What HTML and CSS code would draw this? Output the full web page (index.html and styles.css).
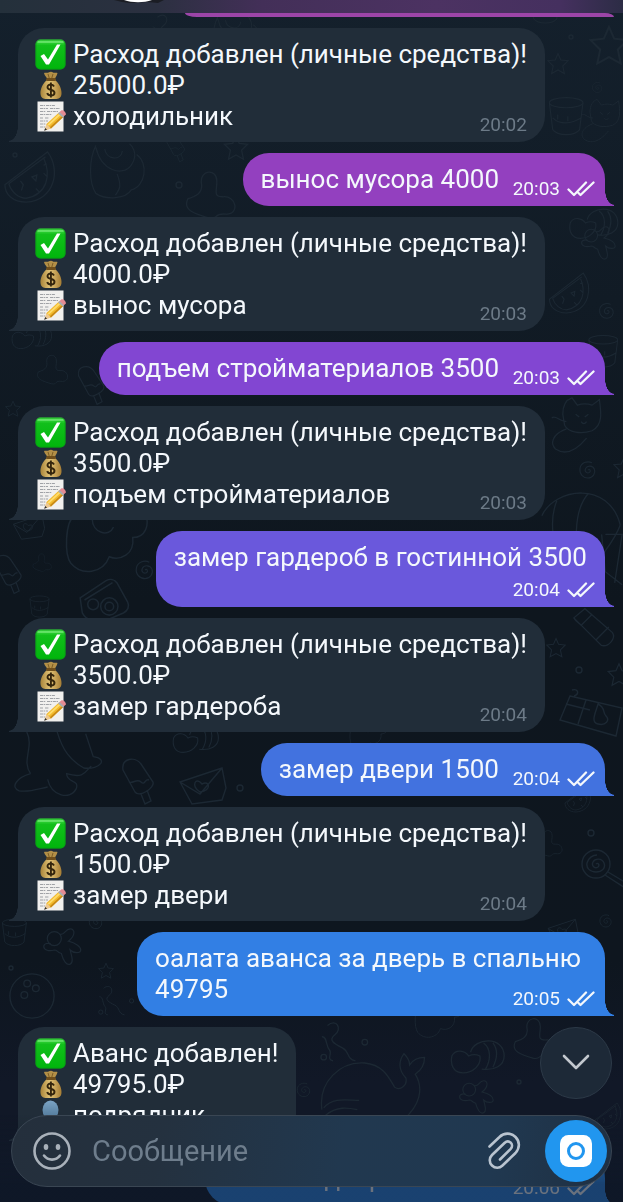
FILE: index.html
```html
<!DOCTYPE html>
<html lang="ru">
<head>
  <meta charset="UTF-8">
  <meta name="viewport" content="width=device-width, initial-scale=1">
  <title>Чат</title>
  <link rel="stylesheet" href="styles.css">
</head>
<body>
  <!-- icons -->
  <svg class="sprite" aria-hidden="true">
    <defs>
      <linearGradient id="g-check" x1="0" y1="0" x2="0" y2="1">
        <stop offset="0" stop-color="#4be04f"/>
        <stop offset=".2" stop-color="#12bf1b"/>
        <stop offset="1" stop-color="#00b50c"/>
      </linearGradient>
      <linearGradient id="g-bag" x1="0" y1="0" x2="1" y2="0">
        <stop offset="0" stop-color="#a8843a"/>
        <stop offset=".45" stop-color="#e3c477"/>
        <stop offset="1" stop-color="#a57c34"/>
      </linearGradient>
      <linearGradient id="g-user" x1="0" y1="0" x2="0" y2="1">
        <stop offset="0" stop-color="#7ba3c4"/>
        <stop offset="1" stop-color="#4d7596"/>
      </linearGradient>
    </defs>
    <symbol id="check" viewBox="0 0 31 31">
      <rect x="0.5" y="0.5" width="30" height="30" rx="5" fill="url(#g-check)"/>
      <rect x="1" y="1" width="29" height="29" rx="4.500" fill="none" stroke="#0a9a14" stroke-opacity=".6"/>
      <path d="M3 3h25" stroke="#8af08a" stroke-opacity=".7" stroke-width="1.500" stroke-linecap="round"/>
      <path d="M5.500 17l3.500-2 4 5.500L22 5.500h3.500L14 25.500h-3z" fill="#fff"/>
    </symbol>
    <symbol id="bag" viewBox="0 0 31 31">
      <path d="M9 3c2-1 3 .5 4.500-.5S17 1.500 18 2.500s3-.5 4.500.5c-.5 3-2.500 4.500-3 7h-7C12 7 9.500 6 9 3z" fill="#b28f47"/>
      <path d="M13 4l1.500 5M18 4l-1.500 5" stroke="#7c5d24" stroke-width="1" fill="none"/>
      <path d="M12 10h8c4 3 7 9 6.500 14-.3 4-3 5-6 5h-9c-3 0-5.700-1-6-5C5 19 8 13 12 10z" fill="url(#g-bag)"/>
      <rect x="11" y="8" width="10" height="3" rx="1.500" fill="#6f4f1c"/>
      <path d="M19 16.500c-.6-1.300-1.800-2-3.200-2-2 0-3.300 1-3.300 2.700 0 3.800 7 1.800 7 5.500 0 1.800-1.500 2.800-3.500 2.800-1.900 0-3.300-.8-3.800-2.500M15.900 12.500v15" fill="none" stroke="#33240c" stroke-width="1.900"/>
    </symbol>
    <symbol id="memo" viewBox="0 0 31 31">
      <rect x="2.500" y="0.5" width="26" height="30" fill="#f1f0ee"/>
      <path d="M5 4.500h5m1 0h9M5 7.500h8m2 0h10M5 10.500h6m1 0h11M5 13.500h12M5 17h3m2 0h4M5 20h8M5 23h6M5 26h5" stroke="#a0a2a6" stroke-width="1.100" stroke-dasharray="3 .6 1.600 .7"/>
      <path d="M10 29l1.500-6L24 11.500l4.500 4.200L16 27.500z" fill="#f2ba2c"/>
      <path d="M12.500 23.500l12-11 1.300 1.300-12 11z" fill="#ffdc6b"/>
      <path d="M14.500 26.500l12.500-11.500 1.500.8L16 27.500z" fill="#c98a17"/>
      <path d="M24 11.500l2.500-2.200c1.700-.8 5 2.200 4.300 4.200l-2.300 2.200z" fill="#e58b93"/>
      <path d="M23 12.400l1.500-1.400 4.600 4.200-1.500 1.400z" fill="#a9adb2"/>
      <path d="M11.500 23l4.500 4.500-6.500 2z" fill="#ecc893"/>
      <path d="M10.300 27l1.700 1.700-3 1z" fill="#2b2b2b"/>
    </symbol>
    <symbol id="user" viewBox="0 0 31 31">
      <ellipse cx="15.500" cy="10" rx="8" ry="9.500" fill="url(#g-user)"/>
      <path d="M2 31c0-7 6-10 13.500-10S29 24 29 31z" fill="url(#g-user)"/>
    </symbol>
    <symbol id="ticks" viewBox="0 0 28 16">
      <path d="M1.500 8.500l5.500 5.500L19 1.500M11.500 12l2 2L26.500 1.500" fill="none" stroke="currentColor" stroke-width="2.300" stroke-linecap="round" stroke-linejoin="round"/>
    </symbol>

    <!-- wallpaper doodles -->
    <symbol id="d-star" viewBox="0 0 30 30"><path d="M15 2l3.500 8 9 1-6.500 6.500L23 27l-8-4.500L7 27l2-9.500L2.500 11l9-1z"/></symbol>
    <symbol id="d-spiral" viewBox="0 0 30 30"><path d="M15 15c2-2 4 1 2 3-3 2-7-1-5-5s9-4 11 1-2 11-8 11S4 20 5 13 14 3 20 6"/></symbol>
    <symbol id="d-melon" viewBox="0 0 60 60"><path d="M2 38L46 4c14 18 8 50-22 52C10 56 2 48 2 38zM6 37L44 9M42 10c8 18 4 38-18 42-8 0-15-6-18-15M18 34l3 4-2 6M30 30l5-2-1 6zM42 26l4 4M34 42l4 4M42 18l3-2"/></symbol>
    <symbol id="d-cloud" viewBox="0 0 80 60"><path d="M12 2C2 10 2 40 8 48c10 12 30 10 36-6 10 4 24-2 22-18 12 0 16-12 12-22M28 6c0 14 16 18 20 8"/></symbol>
    <symbol id="d-ghost" viewBox="0 0 60 60"><path d="M4 38c8-2 16-6 14-16-2-14 16-16 16-2 0 10-4 16 6 16 14-2 18 18 4 18-14-2-8 6-18 4-14-4-28-8-22-20z"/></symbol>
    <symbol id="d-camera" viewBox="0 0 50 40"><path d="M2 18L26 2c4-2 8-1 10 2l10 18c2 4 0 8-4 10l-14 6H12c-4 0-6-2-8-6zM6 20L32 4"/><circle cx="14" cy="24" r="5"/><circle cx="29" cy="26" r="8"/><circle cx="29" cy="26" r="4"/></symbol>
    <symbol id="d-mail" viewBox="0 0 50 40"><path d="M2 16L44 2l4 20-4 12-30 4zM2 16l20 12L44 2M24 18c-6-8-12 2-2 8 12-2 10-12 2-8z"/></symbol>
    <symbol id="d-ice" viewBox="0 0 40 50"><path d="M4 14C2 2 16 0 22 8l12 18c2 6-14 16-18 10zM10 26c4 2 8-4 12 0s4-4 8-2M22 38l4 10 6-3-4-11"/></symbol>
    <symbol id="d-dino" viewBox="0 0 110 80"><path d="M20 2c8 16-6 30 4 44M24 46c-14 4-22 14-12 18 10 2 20-2 30-4M52 2c6 20 14 30 28 38 18 2 26-10 10-12L82 4M42 52c4 18 24 22 30 10 4-10-10-6-10-16 20 6 20-4 26-8"/></symbol>
    <symbol id="d-ball" viewBox="0 0 50 50"><circle cx="25" cy="25" r="23"/><circle cx="20" cy="12" r="3.500"/><circle cx="29" cy="17" r="3.500"/><circle cx="17" cy="24" r="3.500"/></symbol>
    <symbol id="d-ginger" viewBox="0 0 50 50"><circle cx="14" cy="12" r="8"/><path d="M20 7c6 2 6-6 12-6s6 8-2 14c8 2 14 6 14 10s-8 4-12 0c2 8 4 14 0 16s-8-4-10-12c-6-2-4-4-8-4-6 2-12 0-12-4s6-4 8-3"/></symbol>
    <symbol id="d-whale" viewBox="0 0 120 80"><path d="M2 60C-2 30 22 8 48 10c20 2 26 16 32 26 6 4 14-2 12-10-8-8-8-18-2-26 4 4 6 8 6 12 4-6 10-8 16-8 0 8-4 14-10 18 10 16 4 34-12 48M4 58c10-12 26-8 38-8M6 66c12-10 24-8 34-6"/></symbol>
    <symbol id="d-cat" viewBox="0 0 70 70"><path d="M14 20c0-10 4-16 10-18l6 8c6-2 10-2 16 0l8-6c2 14 4 28-8 34-12 4-26 2-30-6zM28 20l4 3M42 20l-4 3M34 28c2 3 4 3 6 0M18 36c-16 6-18 16-12 22 12 8 24 0 34-12M2 24c4-4 8 4 16 4"/></symbol>
    <symbol id="d-balloon" viewBox="0 0 90 110"><path d="M2 30C16 0 74-8 86 40M18 14c-8 20-6 50 10 72M52 6c-18 20-14 60-8 80M86 40c-6 16-24 40-36 50M66 50l4 40 18 14M70 50h18l-8 52"/></symbol>
    <symbol id="d-cup" viewBox="0 0 50 50"><ellipse cx="24" cy="8" rx="20" ry="6"/><path d="M4 8l4 32c6 8 26 8 32 0l4-32M8 26c8 8 22 8 34 0M14 22v6M26 24v6"/></symbol>
    <symbol id="d-cherub" viewBox="0 0 70 70"><path d="M10 4C2 20 2 46 10 58c12 8 34 6 40-4 16-4 20-30 6-40M10 6c6 26 30 34 40 20S48 2 48 2M20 8c2 12 18 14 20 2M34 36c6 16 2 18-2 24"/></symbol>
    <symbol id="d-coral" viewBox="0 0 60 50"><path d="M8 4c10-8 16 4 8 10s0 10 8 14 4 12 14 14M2 16c6 0 4 10 8 14s-4 10 4 12"/><circle cx="48" cy="22" r="3"/><circle cx="4" cy="38" r="3"/></symbol>
    <symbol id="d-nut" viewBox="0 0 60 40"><path d="M2 20c4-8 14-6 18 0 4-2 8-2 12 0 2 10-8 18-18 18S0 30 2 20zM22 16c4-16 36-18 36 4 0 10-10 16-24 14M36 6c8 6 8 18 2 28M46 6c6 8 4 18 0 26"/></symbol>
    <symbol id="d-tube" viewBox="0 0 50 46"><path d="M2 12L14 2l30 26c4 6-4 16-12 14zM10 20L22 8M26 36l14-14M2 12c2 4 6 6 8 8"/></symbol>
    <symbol id="d-card" viewBox="0 0 66 50"><path d="M12 8l52 12-6 28L2 32zM8 16l24 6M28 12l-8 24M40 16c8 4 4 8 8 12s0 10-8 8-2-12 0-20zM14 2c6-2 8 4 2 6"/></symbol>
    <symbol id="d-lolly" viewBox="0 0 50 44"><circle cx="16" cy="16" r="14"/><path d="M16 16c2-2 4 1 2 3-3 2-7-1-5-5s9-4 11 1-2 9-8 9-10-4-9-9 6-8 10-8M28 24l20 12M25 27l20 13"/></symbol>
  </svg>

  <svg class="wallpaper" viewBox="0 0 623 1202" preserveAspectRatio="xMidYMid slice" aria-hidden="true">
    <use href="#d-coral" x="150" y="14" width="50" height="40"/>
    <use href="#d-cherub" x="210" y="14" width="54" height="54"/>
    <use href="#d-cup" x="528" y="-10" width="36" height="36"/>
    <use href="#d-star" x="587" y="24" width="44" height="44"/>
    <use href="#d-star" x="546" y="52" width="24" height="24"/>
    <use href="#d-spiral" x="590" y="80" width="15" height="15"/>
    <use href="#d-cup" x="546" y="92" width="42" height="50"/>
    <use href="#d-cat" x="580" y="98" width="50" height="50"/>
    <use href="#d-melon" x="3" y="148" width="58" height="58"/>
    <use href="#d-cherub" x="84" y="142" width="68" height="62"/>
    <use href="#d-ghost" x="184" y="162" width="58" height="58"/>
    <use href="#d-star" x="222" y="134" width="28" height="28"/>
    <use href="#d-ice" x="164" y="130" width="24" height="36"/>
    <use href="#d-nut" x="566" y="206" width="56" height="34"/>
    <use href="#d-ginger" x="580" y="226" width="40" height="40"/>
    <use href="#d-melon" x="548" y="270" width="46" height="46"/>
    <use href="#d-spiral" x="596" y="300" width="22" height="22"/>
    <use href="#d-nut" x="2" y="322" width="60" height="28"/>
    <use href="#d-ghost" x="36" y="344" width="36" height="46"/>
    <use href="#d-star" x="4" y="400" width="18" height="18"/>
    <use href="#d-ice" x="70" y="364" width="44" height="42"/>
    <use href="#d-cup" x="586" y="330" width="36" height="44"/>
    <use href="#d-cat" x="550" y="396" width="64" height="64"/>
    <use href="#d-spiral" x="576" y="458" width="24" height="24"/>
    <use href="#d-star" x="612" y="456" width="24" height="24"/>
    <use href="#d-balloon" x="540" y="484" width="84" height="110"/>
    <use href="#d-mail" x="12" y="512" width="34" height="30"/>
    <use href="#d-cloud" x="60" y="512" width="90" height="64"/>
    <use href="#d-spiral" x="132" y="556" width="26" height="28"/>
    <use href="#d-ghost" x="32" y="550" width="22" height="22"/>
    <use href="#d-camera" x="78" y="578" width="54" height="44"/>
    <use href="#d-cup" x="28" y="594" width="24" height="26"/>
    <use href="#d-ice" x="-8" y="550" width="34" height="48"/>
    <use href="#d-tube" x="572" y="606" width="46" height="44"/>
    <use href="#d-star" x="545" y="637" width="22" height="22"/>
    <use href="#d-star" x="606" y="662" width="26" height="26"/>
    <use href="#d-card" x="558" y="684" width="66" height="58"/>
    <use href="#d-dino" x="6" y="730" width="108" height="76"/>
    <use href="#d-ice" x="118" y="756" width="42" height="50"/>
    <use href="#d-mail" x="178" y="766" width="50" height="40"/>
    <use href="#d-nut" x="156" y="722" width="80" height="32"/>
    <use href="#d-cloud" x="330" y="722" width="76" height="30"/>
    <use href="#d-melon" x="556" y="784" width="46" height="30"/>
    <use href="#d-ghost" x="534" y="816" width="32" height="50"/>
    <use href="#d-lolly" x="580" y="848" width="50" height="44"/>
    <use href="#d-spiral" x="597" y="912" width="18" height="18"/>
    <use href="#d-mail" x="545" y="918" width="36" height="26"/>
    <use href="#d-cup" x="0" y="914" width="30" height="38"/>
    <use href="#d-ginger" x="42" y="928" width="44" height="44"/>
    <use href="#d-ball" x="8" y="972" width="48" height="48"/>
    <use href="#d-star" x="97" y="962" width="18" height="18"/>
    <use href="#d-coral" x="98" y="982" width="42" height="42"/>
    <use href="#d-spiral" x="82" y="912" width="28" height="20"/>
    <use href="#d-coral" x="320" y="1020" width="56" height="50"/>
    <use href="#d-whale" x="320" y="1052" width="112" height="78"/>
    <use href="#d-nut" x="450" y="1036" width="56" height="40"/>
    <use href="#d-cloud" x="396" y="1002" width="84" height="38"/>
    <use href="#d-ghost" x="512" y="1010" width="50" height="50"/>
    <use href="#d-ginger" x="458" y="1080" width="40" height="40"/>
    <use href="#d-spiral" x="294" y="1080" width="20" height="20"/>
    <use href="#d-melon" x="594" y="1094" width="30" height="44"/>
    <circle cx="15" cy="155" r="2"/>
    <circle cx="179" cy="185" r="3"/>
    <circle cx="571" cy="37" r="2"/>
    <circle cx="579" cy="670" r="3"/>
    <circle cx="591" cy="833" r="3"/>
    <circle cx="240" cy="788" r="3"/>
    <circle cx="11" cy="968" r="2"/>
    <circle cx="519" cy="1082" r="2"/>
  </svg>

  <header class="topbar">
    <svg class="topbar-avatar" viewBox="0 0 50 6" aria-hidden="true">
      <path d="M0 0h50l-6 3-10-1-18 1-8-1z" fill="#1b1d24"/>
      <path d="M10 0c8 3 20 3 28 0z" fill="#fff"/>
    </svg>
  </header>

  <main class="chat">
    <div class="msg out c0 cut"></div>

    <div class="msg in">
      <div class="text">
        <div class="line"><svg class="emoji"><use href="#check"/></svg>Расход добавлен (личные средства)!</div>
        <div class="line"><svg class="emoji"><use href="#bag"/></svg>25000.0₽</div>
        <div class="line"><svg class="emoji"><use href="#memo"/></svg>холодильник</div>
      </div>
      <div class="meta">20:02</div>
    </div>

    <div class="msg out short c1">
      <div class="text">вынос мусора 4000</div>
      <div class="meta">20:03<svg class="ticks"><use href="#ticks"/></svg></div>
    </div>

    <div class="msg in">
      <div class="text">
        <div class="line"><svg class="emoji"><use href="#check"/></svg>Расход добавлен (личные средства)!</div>
        <div class="line"><svg class="emoji"><use href="#bag"/></svg>4000.0₽</div>
        <div class="line"><svg class="emoji"><use href="#memo"/></svg>вынос мусора</div>
      </div>
      <div class="meta">20:03</div>
    </div>

    <div class="msg out short c2">
      <div class="text">подъем стройматериалов 3500</div>
      <div class="meta">20:03<svg class="ticks"><use href="#ticks"/></svg></div>
    </div>

    <div class="msg in">
      <div class="text">
        <div class="line"><svg class="emoji"><use href="#check"/></svg>Расход добавлен (личные средства)!</div>
        <div class="line"><svg class="emoji"><use href="#bag"/></svg>3500.0₽</div>
        <div class="line"><svg class="emoji"><use href="#memo"/></svg>подъем стройматериалов</div>
      </div>
      <div class="meta">20:03</div>
    </div>

    <div class="msg out stacked c3">
      <div class="text">замер гардероб в гостинной 3500</div>
      <div class="meta">20:04<svg class="ticks"><use href="#ticks"/></svg></div>
    </div>

    <div class="msg in">
      <div class="text">
        <div class="line"><svg class="emoji"><use href="#check"/></svg>Расход добавлен (личные средства)!</div>
        <div class="line"><svg class="emoji"><use href="#bag"/></svg>3500.0₽</div>
        <div class="line"><svg class="emoji"><use href="#memo"/></svg>замер гардероба</div>
      </div>
      <div class="meta">20:04</div>
    </div>

    <div class="msg out short c4">
      <div class="text">замер двери 1500</div>
      <div class="meta">20:04<svg class="ticks"><use href="#ticks"/></svg></div>
    </div>

    <div class="msg in">
      <div class="text">
        <div class="line"><svg class="emoji"><use href="#check"/></svg>Расход добавлен (личные средства)!</div>
        <div class="line"><svg class="emoji"><use href="#bag"/></svg>1500.0₽</div>
        <div class="line"><svg class="emoji"><use href="#memo"/></svg>замер двери</div>
      </div>
      <div class="meta">20:04</div>
    </div>

    <div class="msg out long c5">
      <div class="text">оалата аванса за дверь в спальню<br>49795</div>
      <div class="meta">20:05<svg class="ticks"><use href="#ticks"/></svg></div>
    </div>

    <div class="msg in">
      <div class="text">
        <div class="line"><svg class="emoji"><use href="#check"/></svg>Аванс добавлен!</div>
        <div class="line"><svg class="emoji"><use href="#bag"/></svg>49795.0₽</div>
        <div class="line"><svg class="emoji"><use href="#user"/></svg>подрядчик</div>
      </div>
      <div class="meta">20:05</div>
    </div>

    <div class="msg out short c6">
      <div class="text">монтаж двери на 5000</div>
      <div class="meta">20:06<svg class="ticks"><use href="#ticks"/></svg></div>
    </div>
  </main>

  <div class="bottom">
    <button class="scroll-down" type="button" aria-label="Вниз">
      <svg viewBox="0 0 28 16"><path d="M2 2l12 12L26 2" fill="none" stroke="#c3c8ce" stroke-width="2.600" stroke-linecap="round" stroke-linejoin="round"/></svg>
    </button>
    <form class="composer">
      <button class="icon-btn smile" type="button" aria-label="Эмодзи">
        <svg viewBox="0 0 40 40">
          <circle cx="20" cy="20" r="17.500" fill="none" stroke="#a9b1ba" stroke-width="2.600"/>
          <ellipse cx="14" cy="16" rx="2.300" ry="3" fill="#a9b1ba"/>
          <ellipse cx="26" cy="16" rx="2.300" ry="3" fill="#a9b1ba"/>
          <path d="M12 24.500c4 5.500 12 5.500 16 0" fill="none" stroke="#a9b1ba" stroke-width="2.600" stroke-linecap="round"/>
        </svg>
      </button>
      <input class="message-input" type="text" placeholder="Сообщение" aria-label="Сообщение">
      <button class="icon-btn clip" type="button" aria-label="Прикрепить">
        <svg viewBox="0 0 34 38">
          <path d="M2.500 14.500L12.500 5C17 .5 24 .5 28.500 5S33 16 28.500 21L15.500 33.500c-3 3-7.500 3-10.500 0s-3-7.500 0-10.500L17.500 11c2-2 4.500-2 6.200-.3s1.800 4.300 0 6.200L13 27.500" fill="none" stroke="#b9c4d0" stroke-width="2.600" stroke-linecap="round"/>
        </svg>
      </button>
      <button class="record" type="button" aria-label="Видеосообщение">
        <svg viewBox="0 0 32 32">
          <rect width="32" height="32" rx="8.500" fill="#fff"/>
          <circle cx="16" cy="16" r="7.500" fill="none" stroke="#2196ef" stroke-width="3"/>
        </svg>
      </button>
    </form>
  </div>
</body>
</html>
```

FILE: styles.css
```css
* {
  margin: 0;
  padding: 0;
  box-sizing: border-box;
}

body {
  height: 100vh;
  overflow: hidden;
  font-family: Roboto, "Noto Sans", sans-serif;
  font-size: 26px;
  line-height: 31px;
  color: #f4f8fc;
  background: linear-gradient(180deg, #14202c 0%, #111b25 25%, #0e161e 50%, #0e161f 80%, #111827 90%);
}

button {
  border: none;
  background: none;
  cursor: pointer;
}

.sprite {
  position: absolute;
  width: 0;
  height: 0;
}

.wallpaper {
  position: fixed;
  top: 0;
  left: 0;
  width: 100%;
  height: 100%;
  fill: none;
  stroke: #1c2833;
  stroke-width: 1.4;
  z-index: -1;
}

.topbar {
  height: 13px;
  background: linear-gradient(90deg, #24303b 0%, #2b3040 25%, #432f58 42%, #4c3262 70%, #45305f 90%, #2c2c45 100%);
}

.topbar-avatar {
  display: block;
  width: 50px;
  height: 6px;
  margin-left: 114px;
}

/* messages */
.chat {
  display: flex;
  flex-direction: column;
  gap: 11px;
  padding: 0 18px;
}

.msg {
  --bubble: #212d39;
  position: relative;
  display: grid;
  background: var(--bubble);
}

.msg::after {
  content: "";
  position: absolute;
  bottom: 0;
  width: 9px;
  height: 16px;
}

.in {
  align-self: flex-start;
  padding: 11px 18px 10px 17px;
  border-radius: 26px 26px 26px 0;
}

.in::after {
  right: 100%;
  background: radial-gradient(ellipse 9px 15px at 0 0, transparent 96%, var(--bubble) 100%);
}

.out {
  align-self: flex-end;
  max-width: 90%;
  padding: 11px 18px;
  border-radius: 26px 26px 0 26px;
}

.out::after {
  left: 100%;
  background: radial-gradient(ellipse 9px 15px at 100% 0, transparent 96%, var(--bubble) 100%);
}

.text,
.meta {
  grid-area: 1 / 1;
}

.line {
  display: flex;
  align-items: center;
  gap: 7px;
}

.emoji {
  width: 31px;
  height: 31px;
}

.meta {
  align-self: end;
  justify-self: end;
  display: flex;
  align-items: center;
  gap: 7px;
  margin-bottom: -4px;
  font-size: 19px;
  line-height: 22px;
}

.in .meta {
  color: #6c7a87;
}

.out .meta {
  margin-right: -8px;
  margin-bottom: -5px;
}

.ticks {
  width: 28px;
  height: 16px;
}

.short .text {
  padding-right: 88px;
}

.stacked .text {
  padding-bottom: 23px;
}

.long .text {
  padding-right: 6px;
}

.cut {
  width: 420px;
  height: 4px;
  padding: 0;
  border-radius: 0;
  border-bottom-left-radius: 12px 4px;
}

.cut::after {
  height: 4px;
  border-top-right-radius: 9px 4px;
  background: var(--bubble);
}

.c0 { --bubble: #9c45a8; }
.c1 { --bubble: #9340bf; }
.c2 { --bubble: #8246d2; }
.c3 { --bubble: #6a58dc; }
.c4 { --bubble: #4272df; }
.c5 { --bubble: #327fe4; }
.c6 { --bubble: #2b80dc; }

/* bottom panel */
.bottom {
  position: fixed;
  left: 0;
  right: 0;
  bottom: 0;
  padding: 0 11px 15px;
  background: linear-gradient(180deg, transparent 50%, rgba(14, 24, 40, 0.6) 90%);
  display: flex;
  flex-direction: column;
  gap: 16px;
}

.scroll-down {
  align-self: flex-end;
  width: 72px;
  height: 72px;
  border-radius: 50%;
  border: 1px solid #2d3a48;
  background: #1d2937;
}

.scroll-down svg {
  width: 28px;
  height: 16px;
}

.composer {
  display: flex;
  align-items: center;
  height: 72px;
  padding: 0 4px 0 20px;
  border: 1px solid #3a4653;
  border-radius: 36px;
  background: linear-gradient(100deg, #242f3c 0%, #24313f 25%, #21384f 55%, #203850 80%, #1f3043 100%);
}

.icon-btn svg {
  display: block;
}

.smile svg {
  width: 40px;
  height: 40px;
}

.clip svg {
  width: 34px;
  height: 38px;
}

.message-input {
  flex: 1;
  min-width: 0;
  height: 100%;
  margin-left: 20px;
  border: none;
  outline: none;
  background: none;
  color: #f4f8fc;
  font: inherit;
  font-size: 29px;
}

.message-input::placeholder {
  color: #6e7d8c;
  opacity: 1;
}

.record {
  display: flex;
  align-items: center;
  justify-content: center;
  width: 62px;
  height: 62px;
  margin-left: 24px;
  border-radius: 50%;
  background: #2196ef;
}

.record svg {
  width: 32px;
  height: 32px;
}
```
